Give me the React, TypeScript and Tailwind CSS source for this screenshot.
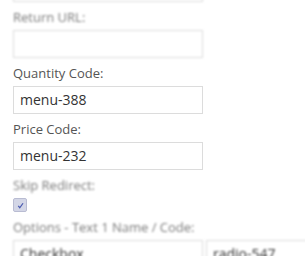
import React from 'react';

const Label: React.FC<{ text: string; faded?: boolean }> = ({ text, faded }) => (
    <div
        className={`mt-[6px] mb-[4px] h-[18px] text-[13px] leading-[18px] whitespace-nowrap ${
            faded ? 'text-[#7a7a7a] blur-[0.9px]' : 'text-[#555555]'
        }`}
    >
        {text}
    </div>
);

const Field: React.FC<{ value?: string; faded?: boolean; width?: string }> = ({ value, faded, width }) => (
    <div
        className={`${width ?? 'w-[190px]'} h-[28px] shrink-0 border border-[#dcdcdc] bg-white pl-[6px] text-[14px] leading-[26px] text-[#333333] whitespace-nowrap overflow-hidden ${
            faded ? 'blur-[0.9px]' : ''
        }`}
    >
        {value}
    </div>
);

export default function App() {
    return (
        <div className="w-[305px] h-[256px] overflow-hidden bg-white" style={{ fontFamily: '"Open Sans", "Liberation Sans", sans-serif' }}>
            <div className="pl-[13px] flex flex-col">
                {/* Cut-off field from above */}
                <div className="-mt-[26px]">
                    <Field faded />
                </div>

                <Label text="Return URL:" faded />
                <Field faded />

                <Label text="Quantity Code:" />
                <Field value="menu-388" />

                <Label text="Price Code:" />
                <Field value="menu-232" />

                <Label text="Skip Redirect:" faded />
                <div className="h-[14px] w-[14px] mt-[0px] rounded-[2px] border border-[#b9bcd2] bg-[#d3d6e6] flex items-center justify-center blur-[0.7px]">
                    <svg viewBox="0 0 10 10" className="w-[9px] h-[9px]">
                        <path d="M2.5 5.5 L4.2 7.5 L7.8 2.5" fill="none" stroke="#4a5bb0" strokeWidth="1.4" />
                    </svg>
                </div>

                <Label text="Options - Text 1 Name / Code:" faded />
                <div className="flex gap-[3px]">
                    <Field value="Checkbox" faded />
                    <Field value="radio-547" faded width="w-[120px]" />
                </div>
            </div>
        </div>
    );
}
